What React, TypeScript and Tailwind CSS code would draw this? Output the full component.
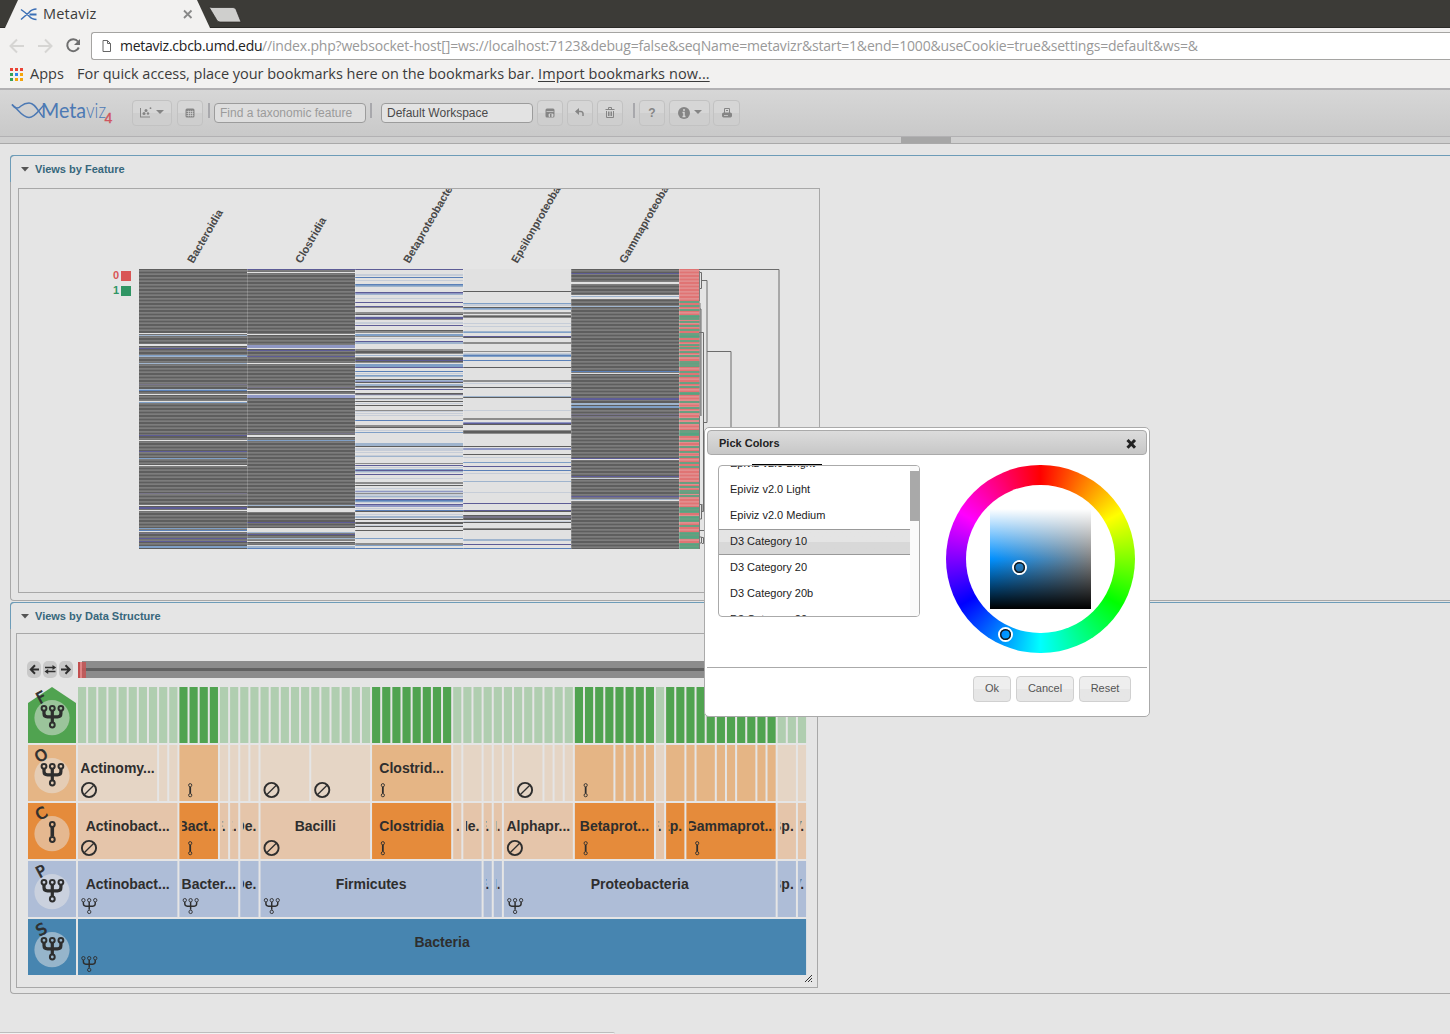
import React from "react";

const INK = "#2e2e2e";

/* ---------- heat map data ---------- */

const PALETTE: Record<string, string> = {
  k: "#5e5e5e",
  g: "#8c8c8c",
  w: "#e1e1e1",
  e: "#c6cdd8",
  l: "#9fb4cd",
  m: "#7f9fc6",
  b: "#5a80b8",
  v: "#8f97c4",
  p: "#5d5c96",
  q: "#787589",
  R: "#e07474",
  G: "#52a581",
};

type Column = { name: string; base: string; cells: string };

const COLUMNS: Column[] = [
  {
    name: "Bacteroidia",
    base: "k",
    cells:
      "333.8w 335.2l 344.5w 345.2w 348.6p 355.1m 356l 363.3l 384q 389l 390b 394.3w 401.4w 402.8m 435.3p 440.3w 451p 458.3m 465.3w 493.7q 505.8w 507p 508p 510.3w 528m 530.3b 531.7w 533.5q 538.7p 541.7p 546m 547m",
  },
  {
    name: "Clostridia",
    base: "k",
    cells:
      "269.5p 272.5w 334.3w 345v 346v 347.2v 348.6w 350.3p 356p 363.3w 387.7q 390.3w 394.3w 395v 396v 397.3v 433.7q 435.5w 436.8w 440.3m 505.7l 508.1w 509w 510.4w 511.7w 522.3p 528.5w 529w 530w 531.2w 532.6l 534p 538.3l 539.7g 541.3w 545.3w 546l 547l 548.3b",
  },
  {
    name: "Betaproteobacteria",
    base: "w",
    cells:
      "269.5p 274e 275.3e 277.3b 280e 284.3b 285m 286l 292.3p 293v 294l 298.3e 302p 306.3p 307.7g 312.7g 313g 314.3k 316e 317.4p 318.8p 319g 322e 323.7e 325.3p 330k 331g 332.2g 334.7m 335m 336.7g 338e 341.3p 342l 343l 349.7g 350g 351k 352k 353.3g 355l 357g 358k 359k 360p 361k 362g 364.7m 365m 366.2m 367p 371.7b 373e 375m 376l 379k 380l 381v 382.8k 384l 385l 386.7k 387g 389p 393.3k 394.3q 395.9e 398g 399.7e 401.7k 403.5e 405.3k 410.7g 411e 413.7e 415e 420.3b 425g 426g 427.3k 430e 432.3m 443l 444l 445l 446.5k 448e 449e 450.4e 452.7e 455e 456l 463.7g 465.3p 467e 469m 470.3p 471l 472e 474.7p 478.3e 482g 483.4g 485k 488.3e 490e 491.3v 492e 493.7g 494e 495e 496l 497e 499.3p 500.7b 501m 502e 504.3p 505v 506v 508e 510.7b 511.9k 514e 516.7l 517l 519k 522k 523k 525e 526.3k 530.3k 538.3m 543.7g 544g 545m 548.3b",
  },
  {
    name: "Epsilonproteobacteria",
    base: "w",
    cells:
      "291k 303.3m 304e 305.3e 307.3k 308m 309l 312.7g 313g 315g 316k 317g 323.7e 326e 331l 332m 336p 337.4k 342.7g 343g 351g 353e 354l 355.7b 356m 360.3b 367.3k 380g 381g 383.7e 387.3k 396.3l 397.5k 410.7e 418g 419g 422v 423.7p 424k 430g 431k 432k 433.2g 446k 448v 449v 454.3k 457e 462.3m 466.3p 470.3b 473e 481.3l 492.3e 503.3p 510.7p 511k 515k 516q 517.4q 518k 519k 521e 522.3k 528g 529.3k 539l 540l 544p 548.3b",
  },
  {
    name: "Gammaproteobacteria",
    base: "k",
    cells:
      "273.3p 282w 283w 295w 296l 297w 298.4w 306.3l 371.7b 373w 398p 399p 403l 404l 406m 407m 414.5q 416q 458.3p 459.9w 476.7p 478.1e 496.3p 497q 499l 500.5w",
  },
];

const CLUSTER: Column = {
  name: "cluster",
  base: "R",
  cells:
    "302.3G 306G 310G 316G 317.4G 319G 322.3G 326G 329.7G 334G 335.5G 337G 341G 345G 348.3G 352.3G 356G 362.3G 363.5G 366.3G 372G 376G 382.7G 386.7G 393G 394.4G 402G 408G 412G 418.7G 423.3G 431G 432.5G 434G 435.3G 440.7G 447.3G 452.3G 457G 463.3G 467.3G 482.7G 486.7G 491G 492.5G 495.7G 507.7G 509G 510.5G 512G 516.7G 518G 519.5G 521G 526G 532.7G 534G 535.5G 537G 538.3G 544G 545.4G 546.8G 548.2G",
};

const ROWS = 200;
const ROW_H = 1.4;

function Stripes({ col, x, width }: { col: Column; x: number; width: number }) {
  const thick = col.base === "R";
  return (
    <g>
      {col.base === "w" ? (
        <rect x={x} y="269" width={width} height="280" fill={PALETTE.w} />
      ) : (
        Array.from({ length: ROWS }, (_, i) => (
          <rect key={i} x={x} y={269 + i * ROW_H} width={width} height={ROW_H} fill={PALETTE[col.base]} />
        ))
      )}
      {col.cells.split(" ").map((c) => {
        const y = Math.floor(parseFloat(c) - (thick ? 0.5 : 0));
        const h = thick ? Math.min(2, 549 - y) : 1;
        return <rect key={c} x={x} y={y} width={width} height={h} fill={PALETTE[c.slice(-1)]} opacity={thick ? 0.85 : 1} />;
      })}
    </g>
  );
}

function HeatMap() {
  return (
    <svg width="800" height="403" viewBox="19 189 800 403" className="block">
      {COLUMNS.map((col, c) => (
        <g key={col.name}>
          <text
            transform={`translate(${193.3 + c * 108} 264) rotate(-60)`}
            fontFamily="Liberation Sans, sans-serif"
            fontWeight="bold"
            fontSize="11"
            fill="#484848"
          >
            {col.name}
          </text>
          <Stripes col={col} x={139 + c * 108} width={108} />
        </g>
      ))}
      <Stripes col={CLUSTER} x={679} width={20.5} />
      {[247, 355, 463, 571, 679].map((x) => (
        <rect key={x} x={x} y="269" width="1" height="280" fill="#ffffff" opacity="0.18" />
      ))}
      <g fontFamily="Liberation Sans, sans-serif" fontWeight="bold" fontSize="11">
        <text x="113" y="279" fill="#d95555">0</text>
        <rect x="121" y="271" width="10" height="10" fill="#d95555" />
        <text x="113" y="294" fill="#309564">1</text>
        <rect x="121" y="286" width="10" height="10" fill="#309564" />
      </g>
      <g fill="none" stroke="#6c6c6c" strokeWidth="1">
        <path d="M699 269.500H779V592" />
        <path d="M700 272.500H701.500V288.500H700M701.500 280.500H707V422.500H704M707 351.500H731V592" />
        <path d="M699 332.500H703.500V511.500H702" />
        <path d="M699.500 271V301M700 303V416M699.500 416V549" stroke="#7d7d7d" />
        <path d="M700 309h1v107M700 504.500h1.500V519H700M702 504v7.500M699 530.500H706M699 537h2.500v6H700M702 537.500h1.500V543.500H702" />
      </g>
    </svg>
  );
}

/* ---------- icicle data ---------- */

type Mark = "none" | "single" | "tree";
type Node = [start: number, end: number, dark?: 0 | 1, label?: string, mark?: Mark];

const X0 = 78;
const LEAF = 10.14;

const features: Node[] = Array.from({ length: 72 }, (_, i): Node => {
  const dark = (i >= 10 && i < 14) || (i >= 29 && i < 37) || (i >= 49 && i < 57) || (i >= 58 && i < 69);
  return [i, i + 1, dark ? 1 : 0];
});

const orders: Node[] = [
  [0, 8, 0, "Actinomy...", "none"], [8, 9], [9, 10], [10, 14, 1, "", "single"],
  [14, 15], [15, 16], [16, 17], [17, 18], [18, 23, 0, "", "none"], [23, 29, 0, "", "none"],
  [29, 37, 1, "Clostrid...", "single"], [37, 38], [38, 40], [40, 41], [41, 42], [42, 43],
  [43, 46, 0, "", "none"], [46, 47], [47, 48], [48, 49], [49, 53, 1, "", "single"],
  [53, 54, 1], [54, 55, 1], [55, 56, 1], [56, 57, 1], [57, 58], [58, 60, 1], [60, 61, 1],
  [61, 63, 1], [63, 64, 1], [64, 65, 1], [65, 67, 1], [67, 68, 1], [68, 69, 1], [69, 71], [71, 72],
];

const classes: Node[] = [
  [0, 10, 0, "Actinobact...", "none"], [10, 14, 1, "Bact...", "single"], [14, 15, 0, "F..."],
  [15, 16, 0, "E..."], [16, 18, 0, "De..."], [18, 29, 0, "Bacilli", "none"],
  [29, 37, 1, "Clostridia", "single"], [37, 38, 0, "E..."], [38, 40, 0, "Ne..."], [40, 41, 0, "F..."],
  [41, 42, 0, "N..."], [42, 49, 0, "Alphapr...", "none"], [49, 57, 1, "Betaprot...", "single"],
  [57, 58, 0, "F..."], [58, 60, 1, "Ep..."], [60, 69, 1, "Gammaprot...", "single"],
  [69, 71, 0, "Sp..."], [71, 72, 0, "V..."],
];

const phyla: Node[] = [
  [0, 10, 0, "Actinobact...", "tree"], [10, 16, 0, "Bacter...", "tree"], [16, 18, 0, "De..."],
  [18, 40, 0, "Firmicutes", "tree"], [40, 41, 0, "F..."], [41, 42, 0, "N..."],
  [42, 69, 0, "Proteobacteria", "tree"], [69, 71, 0, "Sp..."], [71, 72, 0, "V..."],
];

const LEVELS: { id: string; y: number; dark: string; light: string; head: string; mark: Mark; nodes: Node[] }[] = [
  { id: "F", y: 687, dark: "#50a350", light: "#b0ceb0", head: "#50a350", mark: "tree", nodes: features },
  { id: "O", y: 745, dark: "#e5b585", light: "#e5d5c5", head: "#e5b585", mark: "tree", nodes: orders },
  { id: "C", y: 803, dark: "#e58b3b", light: "#e5c5aa", head: "#e58b3b", mark: "single", nodes: classes },
  { id: "P", y: 861, dark: "#aebdd7", light: "#aebdd7", head: "#aebdd7", mark: "tree", nodes: phyla },
  { id: "S", y: 919, dark: "#4785b0", light: "#4785b0", head: "#4785b0", mark: "tree", nodes: [[0, 72, 0, "Bacteria", "tree"]] },
];

function Glyph({ kind, x, y, big }: { kind: Mark; x: number; y: number; big?: boolean }) {
  if (kind === "none")
    return (
      <g fill="none" stroke={INK} transform={`translate(${x} ${y})`}>
        <circle r="7.1" strokeWidth="1.9" />
        <path d="M-4.800 4.800L4.800 -4.800" strokeWidth="1.3" />
      </g>
    );
  const s = big ? 1 : 0.7;
  if (kind === "single")
    return (
      <g fill="none" stroke={INK} transform={`translate(${x} ${y})`}>
        {big ? (
          <>
            <path d="M0.300 -6V4" strokeWidth="3.6" />
            <circle cx="0.300" cy="-8" r="2.400" strokeWidth="2" />
            <circle cx="0.300" cy="7" r="2.400" strokeWidth="2" />
          </>
        ) : (
          <>
            <path d="M-0.200 -3V3.500" strokeWidth="1.8" />
            <circle cx="-0.200" cy="-4.800" r="1.600" strokeWidth="0.9" />
            <circle cx="-0.200" cy="5.200" r="1.600" strokeWidth="0.9" />
          </>
        )}
      </g>
    );
  return (
    <g fill="none" stroke={INK} transform={`translate(${x} ${y + (big ? 0 : 1)}) scale(${s})`}>
      <path d="M-8 -7V-4.500Q-8 -1.200 -4.500 -1.200H5.500Q8.900 -1.200 8.900 -4.500V-7M0.300 -7V4" strokeWidth={big ? 3.2 : 2.1} />
      {[-8, 0.3, 8.9].map((cx) => (
        <circle key={cx} cx={cx} cy="-9.700" r="2.400" strokeWidth={big ? 2 : 1.3} />
      ))}
      <circle cx="0.300" cy="7" r="2.400" strokeWidth={big ? 2 : 1.3} />
    </g>
  );
}

function Icicle() {
  return (
    <svg width="800" height="353" viewBox="17 634 800 353" className="block">
      {[34, 50, 66].map((cx) => (
        <rect key={cx} x={cx - 7} y="661" width="14" height="17" rx="5" fill="#c9c9c9" />
      ))}
      <g fill="none" stroke={INK} strokeWidth="2">
        <path d="M39 669.500H31M35 665.200L30.800 669.500L35 673.800" />
        <path d="M61 669.500H69M65.500 665.200L69.700 669.500L65.500 673.800" />
        <path d="M45 667.500H53.500M47 671.500H55.500" strokeWidth="1.4" />
      </g>
      <path d="M52.500 665V670L56.200 667.500ZM48.200 669V674L44.500 671.500Z" fill={INK} />
      <rect x="82" y="661" width="724" height="17" fill="#8c8c8c" />
      <rect x="82" y="668" width="724" height="3" fill="#616161" />
      <rect x="78" y="662" width="8" height="16" fill="#dc6b6b" opacity="0.8" />
      <rect x="78" y="662" width="2" height="16" fill="#c24f4f" />
      <rect x="82" y="662" width="4" height="16" fill="#b04848" opacity="0.5" />
      {LEVELS.map((lv) => (
        <g key={lv.id}>
          {lv.id === "F" ? (
            <path d="M28 703L52 687L76 703V743H28Z" fill={lv.head} />
          ) : (
            <rect x="28" y={lv.y} width="48" height="56" fill={lv.head} />
          )}
          <circle cx="52" cy={lv.y + 30.7} r="17.600" fill="#e5e5e5" opacity="0.5" />
          <Glyph kind={lv.mark} x={52} y={lv.y + (lv.mark === "single" ? 29.500 : 31)} big />
          <text
            transform={`translate(41 ${lv.y + 10}) rotate(-28)`}
            x="0"
            y="5.800"
            textAnchor="middle"
            fontFamily="DejaVu Sans, sans-serif"
            fontSize="15.500"
            fill={INK}
            stroke={INK}
            strokeWidth="0.7"
          >
            {lv.id}
          </text>
          {lv.nodes.map(([a, b, dark, label, mark], i) => {
            const x = X0 + a * LEAF;
            const w = (b - a) * LEAF - 2;
            const clip = `clip-${lv.id}-${i}`;
            return (
              <g key={i}>
                <rect x={x} y={lv.y} width={w} height="56" fill={dark ? lv.dark : lv.light} />
                {label ? (
                  <>
                    <clipPath id={clip}>
                      <rect x={x + 2.7} y={lv.y} width={Math.max(0, w - 5)} height="56" />
                    </clipPath>
                    <text
                      clipPath={`url(#${clip})`}
                      x={x + w / 2}
                      y={lv.y + 28}
                      textAnchor="middle"
                      fontFamily="Liberation Sans, sans-serif"
                      fontWeight="bold"
                      fontSize="14"
                      fill={INK}
                    >
                      {label}
                    </text>
                  </>
                ) : null}
                {mark ? <Glyph kind={mark} x={x + 11} y={lv.y + 45} /> : null}
              </g>
            );
          })}
        </g>
      ))}
      <path d="M805 982L812 975M808 982L812 978M811 982L812 981" stroke="#333" strokeWidth="1" />
    </svg>
  );
}

/* ---------- browser chrome ---------- */

function Chrome() {
  const dots = ["#ea4335", "#ea4335", "#ea4335", "#34a05a", "#2f86f0", "#f4a50b", "#34a05a", "#f4a50b", "#f4a50b"];
  return (
    <header className="font-['Open_Sans',sans-serif] text-[#3b3b3b]">
      <div className="relative flex h-7 items-center border-b border-[#2b2a27] bg-[#3c3b37]">
        <svg width="250" height="28" className="absolute left-0 top-0">
          <path d="M5 28L18 0H197L210 28Z" fill="#f2f1f0" />
          <path d="M212 7.500H233Q235 7.500 236 9.500L241 22H220Q217.500 22 216.500 19.500L209 7Z" fill="#cfcfcd" stroke="#2b2a27" strokeWidth="0.7" />
          <g fill="none" stroke="#3b6fb6">
            <path d="M21 9.500Q26 13 29 16Q32 19.500 36.500 19.500M21 19.500L29 12.500Q32 9 36.500 9" strokeWidth="1.5" />
            <path d="M29.500 14.500H36.500" strokeWidth="2" />
          </g>
          <path d="M184 10.500L191.500 18M191.500 10.500L184 18" stroke="#888" strokeWidth="1.8" />
        </svg>
        <span className="relative ml-[43px] mt-[2px] text-[14.5px] leading-none tracking-[0.2px]">Metaviz</span>
      </div>
      <div className="flex h-9 items-center bg-[#f2f1f0]">
        <svg width="91" height="36" fill="none" className="shrink-0" strokeWidth="2">
          <path d="M24 18H11M17 11.500L10.500 18L17 24.500M38 18H51M45 11.500L51.500 18L45 24.500" stroke="#d6d5d3" />
          <path d="M78 13.500A6 6 0 1 0 78.800 19.500" stroke="#6f6f6f" />
          <path d="M80 11V17H74Z" fill="#6f6f6f" />
        </svg>
        <div className="flex h-7 flex-1 items-center overflow-hidden whitespace-nowrap rounded-l-[3px] border border-r-0 border-[#a5a4a2] bg-white pb-[1px] text-[14px] leading-none text-[#999]">
          <svg width="10" height="12" className="ml-[10px] mr-[8px] shrink-0" fill="none" stroke="#666">
            <path d="M1 0.500H5.500L8.500 3.500V11.500H1ZM5.500 0.500V3.500H8.500" />
          </svg>
          <span className="w-[142px] shrink-0 tracking-[-0.25px] text-[#222]">metaviz.cbcb.umd.edu</span>
          <span className="tracking-[-0.18px]">
            //index.php?websocket-host[]=ws://localhost:7123&amp;debug=false&amp;seqName=metavizr&amp;start=1&amp;end=1000&amp;useCookie=true&amp;settings=default&amp;ws=&amp;
          </span>
        </div>
      </div>
      <div className="flex h-6 items-center whitespace-nowrap bg-[#f2f1f0] pb-[4px] pl-[10px] text-[14.5px] leading-none">
        <div className="mr-[7px] grid grid-cols-3 gap-[2px]">
          {dots.map((c, i) => (
            <i key={i} className="h-[3px] w-[3px]" style={{ background: c }} />
          ))}
        </div>
        <span className="w-[47px]">Apps</span>
        <span className="w-[461px] tracking-[-0.03px]">For quick access, place your bookmarks here on the bookmarks bar.</span>
        <span className="tracking-[0.08px] underline underline-offset-2">Import bookmarks now...</span>
      </div>
    </header>
  );
}

/* ---------- application toolbar ---------- */

function Tool({ className, children }: { className: string; children: React.ReactNode }) {
  return (
    <button
      className={`flex h-[26px] shrink-0 items-center justify-center gap-1 rounded-[4px] border border-[#c2c2c2] bg-linear-to-b from-[#d6d6d6] from-50% to-[#cecece] to-50% text-[#858585] ${className}`}
    >
      {children}
    </button>
  );
}

const Caret = () => (
  <svg width="8" height="4" className="-mt-px">
    <path d="M0 0H8L4 4Z" fill="#858585" />
  </svg>
);

const Sep = ({ className }: { className: string }) => <i className={`-mt-1 h-[15px] w-[2px] shrink-0 bg-[#a8a8ac] ${className}`} />;

function Toolbar() {
  return (
    <div>
      <div className="flex h-[49px] items-center border-b border-t-2 border-[#b2b1b3] bg-linear-to-b from-[#d7d7d7] to-[#c9c9c9] pb-[1px]">
        <svg width="132" height="40" viewBox="0 93 132 40" className="shrink-0">
          <path d="M12 104.500C18 109 22 117.500 29 117.500C35 117.500 39 110 43.500 105.500" fill="none" stroke="#4c79b4" strokeWidth="1.500" />
          <path d="M12 104.500C15 109 18 109 21 106C24 103.500 26 103 29 103C35 103 38 111 43 117" fill="none" stroke="#4c79b4" strokeWidth="1.500" />
          <text x="41" y="118" fontFamily="Lato, sans-serif" fontSize="21" fill="#4c79b4" textLength="45" lengthAdjust="spacingAndGlyphs">Meta</text>
          <text x="86" y="118" fontFamily="Lato, sans-serif" fontWeight="300" fontSize="21" fill="#4c79b4" textLength="20" lengthAdjust="spacingAndGlyphs">viz</text>
          <text x="104.500" y="122.500" fontFamily="Liberation Sans, sans-serif" fontSize="14" fill="#cf5560" stroke="#cf5560" strokeWidth="0.4">4</text>
        </svg>
        <Tool className="w-10">
          <svg width="12" height="11" fill="#858585">
            <path d="M0 1H1V9.500H10V10.500H0Z" />
            <circle cx="4" cy="6.500" r="1.500" /><circle cx="6" cy="3.500" r="1.500" /><circle cx="8" cy="6.500" r="1.200" /><circle cx="10.500" cy="1.200" r="0.900" />
          </svg>
          <Caret />
        </Tool>
        <Tool className="ml-[5px] w-[26px]">
          <svg width="10" height="10">
            <rect x="0.500" y="0.500" width="9" height="9" rx="1.500" fill="#858585" />
            <path d="M1.500 3.500H8.500M1.500 5.500H8.500M1.500 7.500H8.500M3.500 2.500V8.500M5.500 2.500V8.500M7.500 2.500V8.500" stroke="#d2d2d2" strokeWidth="0.700" />
          </svg>
        </Tool>
        <Sep className="ml-[5px]" />
        <div className="ml-[4px] flex h-5 w-[152px] shrink-0 items-center rounded-[4px] border border-[#9c9c9c] bg-[#dedede] pl-[5px] text-[12px] text-[#9b9b9b]">
          Find a taxonomic feature
        </div>
        <Sep className="ml-[4px]" />
        <div className="ml-[9px] flex h-5 w-[152px] shrink-0 items-center rounded-[4px] border border-[#9c9c9c] bg-[#e3e3e3] pl-[5px] text-[12px] text-[#4a4a4a]">
          Default Workspace
        </div>
        <Tool className="ml-[4px] w-[26px]">
          <svg width="10" height="10">
            <rect x="0.500" y="0.500" width="9" height="9" rx="1.500" fill="#858585" />
            <path d="M1.500 3.500H8.500M4 6H8V8.500H4Z" stroke="#d2d2d2" fill="#d2d2d2" strokeWidth="0.800" />
            <rect x="5" y="6" width="1.500" height="3" fill="#858585" />
          </svg>
        </Tool>
        <Tool className="ml-[4px] w-[26px]">
          <svg width="10" height="9" fill="none" stroke="#858585" strokeWidth="1.500">
            <path d="M2 3.500H6Q8.500 3.500 8 8" /><path d="M4 0V7L0 3.500Z" fill="#858585" stroke="none" />
          </svg>
        </Tool>
        <Tool className="ml-[4px] w-[26px]">
          <svg width="10" height="11" fill="none" stroke="#858585">
            <path d="M0.500 2.500H9.500M3.500 2V0.500H6.500V2M1.500 4V10.500H8.500V4M3.500 4.500V9M5 4.500V9M6.500 4.500V9" />
          </svg>
        </Tool>
        <Sep className="ml-[10px]" />
        <Tool className="ml-[4px] w-[26px] text-[12px] font-bold">?</Tool>
        <Tool className="ml-[4px] w-[41px]">
          <svg width="12" height="12">
            <circle cx="6" cy="6" r="6" fill="#858585" /><path d="M6 2V4M4.500 5.500H6V9M4.500 9.500H7.500" stroke="#d5d5d5" strokeWidth="1.500" fill="none" />
          </svg>
          <Caret />
        </Tool>
        <Tool className="ml-[3px] w-[27px]">
          <svg width="10" height="10" fill="none" stroke="#858585">
            <path d="M2.500 5V0.500H7.500V5M4 2.500H6" /><rect x="0.500" y="5" width="9" height="4" rx="1" fill="#858585" /><path d="M2 7.500H6" stroke="#d2d2d2" strokeWidth="0.800" />
          </svg>
        </Tool>
      </div>
      <div className="h-[7px] border-b border-[#a9a9a9] bg-[#cfcfcf]">
        <div className="ml-[901px] h-[6px] w-[50px] bg-[#a6a6a6]" />
      </div>
    </div>
  );
}

/* ---------- collapsible sections ---------- */

function Section({ title, className, children }: { title: string; className: string; children: React.ReactNode }) {
  return (
    <section className={`relative ml-[10px] rounded-l-[4px] border border-r-0 border-[#a8a8a8] border-t-[#6d9cb8] ${className}`}>
      <h2 className="-ml-px -mt-px flex h-[27px] items-center gap-[6px] rounded-tl-[4px] border-l border-t border-[#6d9cb8] pl-[10px] pt-[1px] text-[11px] font-bold text-[#37677c]">
        <svg width="8" height="5">
          <path d="M0 0H8L4 4.500Z" fill="#555" />
        </svg>
        {title}
      </h2>
      {children}
    </section>
  );
}

/* ---------- color dialog ---------- */

const PALETTES = ["Epiviz v2.0 Bright", "Epiviz v2.0 Light", "Epiviz v2.0 Medium", "D3 Category 10", "D3 Category 20", "D3 Category 20b", "D3 Category 20c"];

const Knob = ({ className }: { className: string }) => (
  <i className={`absolute flex h-[15px] w-[15px] items-center justify-center rounded-full border-2 border-white ${className}`}>
    <svg width="11" height="11">
      <circle cx="5.500" cy="5.500" r="4.800" fill="none" stroke="#151515" strokeWidth="1.400" />
    </svg>
  </i>
);

function PickColors() {
  return (
    <div className="absolute left-[704px] top-[427px] h-[290px] w-[446px] rounded-[5px] border border-[#aaa] bg-white p-[2px] text-[11px] text-[#222]">
      <div className="flex h-[25px] items-center justify-between rounded-[4px] border border-[#aaa] bg-linear-to-b from-[#dcdcdc] to-[#c7c7c7] pl-[11px] pr-[9px] pt-[2px] font-bold">
        <span>Pick Colors</span>
        <svg width="11" height="10">
          <path d="M1.500 1L9 8.800M9 1L1.500 8.800" stroke="#222" strokeWidth="3" />
        </svg>
      </div>
      <div className="relative flex h-[213px] border-b border-[#aaa] pl-[11px] pt-[10px]">
        <i className="absolute left-[45px] top-[9px] h-px w-[70px] bg-black" />
        <div className="flex h-[152px] w-[202px] overflow-hidden rounded-[4px] border border-[#aaa]">
          <ul className="-mt-[15px] flex-1">
            {PALETTES.map((p) => (
              <li
                key={p}
                className={
                  p === "D3 Category 10"
                    ? "flex h-[26px] items-center border-y border-[#999] bg-linear-to-b from-[#e4e4e4] from-50% to-[#d8d8d8] to-50% pb-[2px] pl-[11px]"
                    : "flex h-[26px] items-center pb-[2px] pl-[11px]"
                }
              >
                {p}
              </li>
            ))}
          </ul>
          <div className="w-[9px] bg-[#fafafa] pt-[5px]">
            <div className="h-[50px] bg-[#a9a9a9]" />
          </div>
        </div>
        <div className="relative ml-[26px] flex h-[188px] w-[189px] items-center justify-center rounded-full bg-[conic-gradient(#f00,#ff0,#0f0,#0ff,#00f,#f0f,#f00)]">
          <div className="flex h-[148px] w-[149px] items-center justify-center rounded-full bg-white">
            <div className="h-[100px] w-[101px] bg-[linear-gradient(to_bottom,#fff_0%,transparent_50%,#000_100%),linear-gradient(to_right,#0090ff,#808080)]" />
          </div>
          <Knob className="left-[66px] top-[95px]" />
          <Knob className="left-[52px] top-[162px]" />
        </div>
      </div>
      <div className="flex justify-end gap-[5px] pr-[16px] pt-[8px] text-[#555]">
        <button className="h-[26px] w-[38px] rounded-[4px] border border-[#d0d0d0] bg-linear-to-b from-[#eeeeee] from-50% to-[#e6e6e6] to-50% pb-[2px]">Ok</button>
        <button className="h-[26px] w-[58px] rounded-[4px] border border-[#d0d0d0] bg-linear-to-b from-[#eeeeee] from-50% to-[#e6e6e6] to-50% pb-[2px]">Cancel</button>
        <button className="h-[26px] w-[52px] rounded-[4px] border border-[#d0d0d0] bg-linear-to-b from-[#eeeeee] from-50% to-[#e6e6e6] to-50% pb-[2px]">Reset</button>
      </div>
    </div>
  );
}

export default function App() {
  return (
    <div className="relative flex h-[1034px] w-[1450px] flex-col overflow-hidden bg-[#e5e5e5] font-['Liberation_Sans',sans-serif]">
      <Chrome />
      <Toolbar />
      <main className="flex flex-1 flex-col pt-[11px]">
        <Section title="Views by Feature" className="h-[446px]">
          <div className="ml-[7px] mt-[6px] h-[405px] w-[802px] overflow-hidden border border-[#a8a8a8]">
            <HeatMap />
          </div>
        </Section>
        <Section title="Views by Data Structure" className="mt-px h-[392px]">
          <div className="ml-[5px] mt-[4px] h-[355px] w-[802px] overflow-hidden border border-[#a8a8a8]">
            <Icicle />
          </div>
        </Section>
        <div className="mt-auto h-[2px] w-[615px] rounded-tr-[2px] border-t border-[#bdbdbd] bg-[#f2f2f2]" />
      </main>
      <PickColors />
    </div>
  );
}
